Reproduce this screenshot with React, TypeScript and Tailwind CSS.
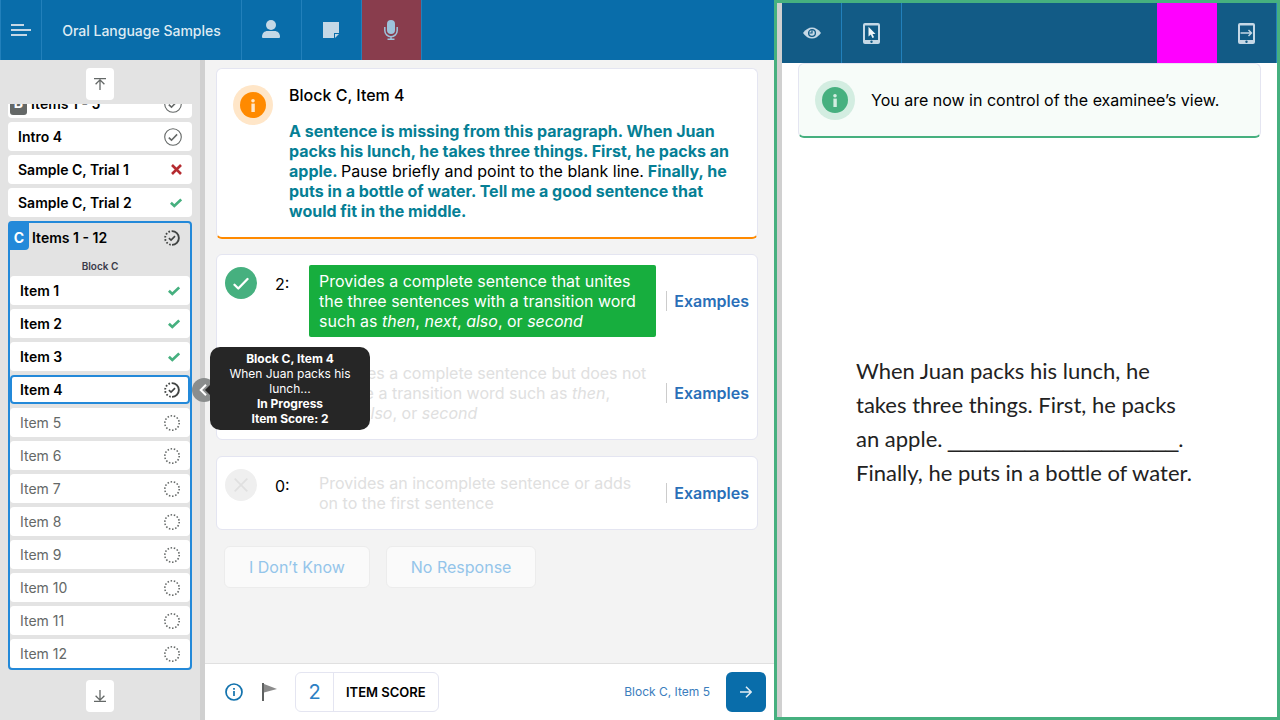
import type { ReactNode } from "react";

type Status = "done" | "right" | "wrong" | "progress" | "open";

function CheckGlyph({ className }: { className: string }) {
  return (
    <svg viewBox="0 0 12 10" className={className} fill="none" stroke="currentColor" strokeWidth="2.7">
      <path d="M.9 4.800 4.300 8 11.200 1.400" />
    </svg>
  );
}

function StatusIcon({ status }: { status: Status }) {
  if (status === "right") return <CheckGlyph className="h-[10px] w-3 text-[#46b07f]" />;
  if (status === "wrong")
    return (
      <svg viewBox="0 0 11 11" className="h-[11px] w-[11px]" fill="none" stroke="#b52b30" strokeWidth="2.6">
        <path d="M1 1l9 9M10 1l-9 9" />
      </svg>
    );
  if (status === "done")
    return (
      <svg viewBox="0 0 18 18" className="h-[18px] w-[18px]" fill="none" stroke="#646867">
        <circle cx="9" cy="9" r="8.3" strokeWidth="1.1" />
        <path d="M4.8 9.6l2.7 2.6 5.6-5.8" strokeWidth="1.6" />
      </svg>
    );
  if (status === "progress")
    return (
      <svg viewBox="0 0 17 17" className="h-4 w-4" fill="none" stroke="#414443">
        <path d="M8.5 1.200a7.300 7.300 0 0 1 0 14.600" strokeWidth="2" />
        <path d="M8.5 15.800a7.300 7.300 0 0 1 0-14.600" strokeWidth="2" strokeDasharray="1.7 1.8" strokeDashoffset="-1.4" />
        <path d="M5.200 8.600l2.300 2.200 4.200-4.300" strokeWidth="1.700" />
      </svg>
    );
  return (
    <svg viewBox="0 0 16 16" className="h-4 w-4" fill="none" stroke="#646867">
      <circle cx="8" cy="8" r="7.200" strokeWidth="1.600" strokeDasharray="1.500 1.730" />
    </svg>
  );
}

function NavRow({ label, status, badge, current }: { label: string; status: Status; badge?: string; current?: boolean }) {
  return (
    <li className="shrink-0">
      <button
        className={`relative flex h-[29px] w-full items-center justify-between rounded-[4px] bg-white pr-[10px] text-left text-sm ${
          badge ? "pl-[23px]" : "pl-[10px]"
        } ${status === "open" ? "text-[#646867]" : "font-semibold text-black"} ${
          current ? "ring-2 ring-inset ring-[#2389d9]" : ""
        }`}
      >
        {badge && (
          <span className="absolute bottom-[3px] left-[2px] flex h-[25px] w-[17px] items-center justify-center rounded-[3px] bg-[#646867] text-sm font-bold text-white">
            {badge}
          </span>
        )}
        <span>{label}</span>
        <StatusIcon status={status} />
      </button>
    </li>
  );
}

const blockItems: { label: string; status: Status }[] = Array.from({ length: 12 }, (_, i) => ({
  label: `Item ${i + 1}`,
  status: i < 3 ? "right" : i === 3 ? "progress" : "open",
}));

function Sidebar() {
  return (
    <nav aria-label="Items" className="relative flex w-[205px] shrink-0 flex-col border-r-[5px] border-[#d0d0d0] bg-[#e3e3e3] px-2 py-2">
      <button aria-label="Scroll to top" className="mb-1 flex h-8 w-7 shrink-0 items-center justify-center self-center rounded-[4px] bg-white">
        <svg viewBox="0 0 12 12" className="h-3 w-3" fill="none" stroke="#646867" strokeWidth="1.3">
          <path d="M0 .7h12M6 12V1.8M1.6 6.2 6 1.8l4.4 4.4" />
        </svg>
      </button>
      <ul className="flex min-h-0 flex-1 flex-col justify-end gap-1 overflow-hidden">
        <NavRow label="Items 1 - 5" status="done" badge="B" />
        <NavRow label="Intro 4" status="done" />
        <NavRow label="Sample C, Trial 1" status="wrong" />
        <NavRow label="Sample C, Trial 2" status="right" />
        <li className="shrink-0 rounded-[4px] border-2 border-[#2389d9]">
          <div className="flex h-[30px] items-center pr-[10px]">
            <span className="-ml-px mr-[3px] flex h-[27px] w-5 items-center justify-center self-start rounded-br-[4px] bg-[#2389d9] pt-[2px] text-sm font-bold text-white">
              C
            </span>
            <span className="flex-1 text-sm font-semibold text-black">Items 1 - 12</span>
            <StatusIcon status="progress" />
          </div>
          <div className="h-[23px] text-center text-[10px] leading-[26px] font-semibold text-[#3b3b4a]">Block C</div>
          <ul className="flex flex-col gap-1">
            {blockItems.map((item, i) => (
              <NavRow key={item.label} label={item.label} status={item.status} current={i === 3} />
            ))}
          </ul>
        </li>
      </ul>
      <button aria-label="Scroll to bottom" className="mt-[10px] flex h-8 w-7 shrink-0 items-center justify-center self-center rounded-[4px] bg-white">
        <svg viewBox="0 0 12 12" className="h-3 w-3" fill="none" stroke="#646867" strokeWidth="1.3">
          <path d="M0 11.3h12M6 0v10.2M1.6 5.8 6 10.2l4.4-4.4" />
        </svg>
      </button>
      <button aria-label="Collapse panel" className="absolute top-[318px] -right-[16px] z-10 flex h-6 w-6 items-center rounded-full bg-[#8a8d8d] pl-[7px]">
        <svg viewBox="0 0 8 12" className="h-3 w-2" fill="none" stroke="#fff" strokeWidth="2">
          <path d="M7 .7 1.7 6 7 11.3" />
        </svg>
      </button>
      <div role="tooltip" className="absolute top-[287px] left-[210px] z-20 w-40 rounded-[10px] bg-[#262626] px-[18px] py-[4px] text-center text-xs leading-[15px] text-white">
        <span className="absolute top-[38px] -left-[5px] h-0 w-0 border-y-[5px] border-r-[5px] border-y-transparent border-r-[#262626]" />
        <div className="font-bold">Block C, Item 4</div>
        <div>When Juan packs his lunch...</div>
        <div className="font-bold">In Progress</div>
        <div className="font-bold">Item Score: 2</div>
      </div>
    </nav>
  );
}

function InfoBadge({ tone }: { tone: "orange" | "green" }) {
  const orange = tone === "orange";
  return (
    <svg viewBox="0 0 40 40" className="h-10 w-10 shrink-0">
      <circle cx="20" cy="20" r="20" fill={orange ? "#ffe6c8" : "#d3ede1"} />
      <circle cx="20" cy="20" r="13" fill={orange ? "#ff8a00" : "#46b07f"} />
      <circle cx="20" cy="15.7" r="1.8" fill={orange ? "#ffe6c8" : "#d3ede1"} />
      <rect x="18.4" y="18.6" width="3.4" height="8.4" fill={orange ? "#ffe6c8" : "#d3ede1"} />
    </svg>
  );
}

function ScoreRow({ score, selected, children }: { score: number; selected?: boolean; children: ReactNode }) {
  return (
    <div className="flex">
      <button
        aria-label={`Score ${score}`}
        className={`mt-[2px] flex h-8 w-8 shrink-0 items-center justify-center rounded-full ${
          selected ? "bg-[#46b07f] text-white" : "bg-[#efefef] text-[#e0e0e0]"
        }`}
      >
        {score === 0 ? (
          <svg viewBox="0 0 14 14" className="h-[14px] w-[14px]" fill="none" stroke="currentColor" strokeWidth="1.7">
            <path d="M.7.7l12.6 12.6M13.3.7.7 13.3" />
          </svg>
        ) : (
          <svg viewBox="0 0 16 13" className="h-[13px] w-4" fill="none" stroke="currentColor" strokeWidth="2.3" strokeLinecap="round" strokeLinejoin="round">
            <path d="M1.500 7.800 5.300 11.500 14.500 2" />
          </svg>
        )}
      </button>
      <span className="w-[52px] shrink-0 pt-[9px] pl-[18px]">{score}:</span>
      <p className={`min-w-0 flex-1 rounded-[2px] py-[6px] pr-2 pl-[10px] ${selected ? "bg-[#17ae3e] text-white" : "text-[#e0e0e0]"}`}>
        {children}
      </p>
      <a href="#examples" className="ml-[10px] self-center border-l border-[#ccc] pl-[7px] font-semibold text-[#2a6fb8]">
        Examples
      </a>
    </div>
  );
}

const cell = "flex h-full w-[60px] items-center justify-center border-r border-[#2280bb]";

function PrimaryHeader() {
  return (
    <header className="flex h-[60px] shrink-0 bg-[#096daa] text-[#c5d8e6]">
      <button aria-label="Menu" className="flex w-[42px] items-center border-x border-[#2280bb] pl-[10px]">
        <svg viewBox="0 0 20 12" className="h-3 w-5" fill="none" stroke="currentColor" strokeWidth="2">
          <path d="M0 1h13M0 6h20M0 11h16" />
        </svg>
      </button>
      <h1 className="flex w-[200px] items-center justify-center border-r border-[#2280bb] pt-[2px] text-sm font-medium text-[#dfebf3]">
        Oral Language Samples
      </h1>
      <button aria-label="Examinee" className={`${cell} pr-[2px] pb-[2px]`}>
        <svg viewBox="0 0 18 18" className="h-[18px] w-[18px]" fill="currentColor">
          <circle cx="9" cy="5" r="5" />
          <path d="M0 17c0-4 2.500-6 5.500-6h7c3 0 5.500 2 5.500 6q0 1-1 1H1q-1 0-1-1z" />
        </svg>
      </button>
      <button aria-label="Notes" className={`${cell} pr-[2px]`}>
        <svg viewBox="0 0 16 16" className="h-4 w-4" fill="currentColor">
          <path d="M0 0h16v11h-5v5H0z" />
          <path d="M12 12h4l-4 4z" />
        </svg>
      </button>
      <button aria-label="Microphone" className="flex w-[60px] items-center justify-center border-r border-[#2280bb] bg-[#893d4d] pr-[2px] text-[#9dc3db]">
        <svg viewBox="0 0 14 20" className="h-5 w-[14px]">
          <rect x="3" y="0" width="8" height="14" rx="4" fill="currentColor" />
          <path d="M.8 7v3.500a6.200 6.200 0 0 0 12.400 0V7M7 16v3M3.500 19.300h7" fill="none" stroke="currentColor" strokeWidth="1.500" />
        </svg>
      </button>
    </header>
  );
}

function Tablet({ children }: { children: ReactNode }) {
  return (
    <svg viewBox="0 0 17 21" className="h-[21px] w-[17px]">
      <path fillRule="evenodd" fill="#c5d8e6" d="M2 0h13q2 0 2 2v17q0 2-2 2H2q-2 0-2-2V2q0-2 2-2zM2 2.500v14.500h13V2.500z" />
      <circle cx="8.500" cy="18.800" r="1.200" fill="#125b86" />
      {children}
    </svg>
  );
}

export default function App() {
  return (
    <div className="grid h-screen grid-cols-[774fr_506fr] overflow-hidden bg-[#f3f3f3] font-['Inter',sans-serif] text-base leading-5 text-black">
      <div className="flex min-h-0 min-w-0 flex-col">
        <PrimaryHeader />
        <div className="flex min-h-0 flex-1">
          <Sidebar />
          <div className="flex min-w-0 flex-1 flex-col">
            <main className="flex-1 pt-2 pr-4 pl-[11px]">
              <section className="flex gap-4 rounded-[6px] border border-b-2 border-[#e4e5f1] border-b-[#ff8a00] bg-white p-4">
                <InfoBadge tone="orange" />
                <div className="min-w-0">
                  <h2 className="mb-4 font-medium">Block C, Item 4</h2>
                  <p className="font-bold text-[#067f95]">
                    A sentence is missing from this paragraph. When Juan packs his lunch, he takes three things. First, he packs an apple.{" "}
                    <span className="font-normal text-black">Pause briefly and point to the blank line.</span> Finally, he puts in a bottle of water.
                    Tell me a good sentence that would fit in the middle.
                  </p>
                </div>
              </section>
              <section className="mt-[15px] flex flex-col gap-5 rounded-[6px] border border-[#e4e5f1] bg-white px-2 py-[10px]">
                <ScoreRow score={2} selected>
                  Provides a complete sentence that unites the three sentences with a transition word such as <i>then</i>, <i>next</i>, <i>also</i>, or{" "}
                  <i>second</i>
                </ScoreRow>
                <ScoreRow score={1}>
                  Provides a complete sentence but does not include a transition word such as <i>then</i>, <i>next</i>, <i>also</i>, or <i>second</i>
                </ScoreRow>
              </section>
              <section className="mt-4 rounded-[6px] border border-[#e4e5f1] bg-white px-2 py-[10px]">
                <ScoreRow score={0}>Provides an incomplete sentence or adds on to the first sentence</ScoreRow>
              </section>
              <div className="mt-4 flex gap-4 pl-2">
                <button className="h-[42px] rounded-[6px] border border-[#ececec] bg-[#fafafa] px-6 text-[#94c5ea]">I Don’t Know</button>
                <button className="h-[42px] rounded-[6px] border border-[#ececec] bg-[#fafafa] px-6 text-[#94c5ea]">No Response</button>
              </div>
            </main>
            <footer className="flex h-[57px] shrink-0 items-center border-t border-[#e0e0e0] bg-white pr-2 pl-5">
              <button aria-label="Information">
                <svg viewBox="0 0 18 18" className="h-[18px] w-[18px]" fill="none" stroke="#1272ad">
                  <circle cx="9" cy="9" r="8" strokeWidth="1.700" />
                  <path d="M9 8v5M9 5v1.700" strokeWidth="1.700" />
                </svg>
              </button>
              <button aria-label="Flag" className="ml-[19px]">
                <svg viewBox="0 0 15 18" className="h-[18px] w-[15px]">
                  <path d="M2 1l13 5L2 9.500z" fill="#8b8b8b" />
                  <path d="M0 0h2v18H0z" fill="#5e6161" />
                </svg>
              </button>
              <div className="ml-[18px] flex h-10 items-center rounded-[6px] border border-[#e4e5f1]">
                <span className="flex h-full w-[38px] items-center justify-center border-r border-[#e4e5f1] text-xl text-[#2c80c4]">2</span>
                <span className="px-3 text-[13px] font-semibold">ITEM SCORE</span>
              </div>
              <span className="ml-auto text-xs text-[#3b7dbd]">Block C, Item 5</span>
              <button aria-label="Next item" className="ml-4 flex h-10 w-10 items-center justify-center rounded-[6px] bg-[#096daa]">
                <svg viewBox="0 0 12 12" className="h-3 w-3" fill="none" stroke="#e3eef5" strokeWidth="1.500">
                  <path d="M0 6h11M6 .8 11.200 6 6 11.200" />
                </svg>
              </button>
            </footer>
          </div>
        </div>
      </div>

      <div className="flex min-w-0 border-[3px] border-[#46b07f] bg-white">
        <div className="w-[5px] shrink-0 bg-[#d0d0d0]" />
        <div className="flex min-w-0 flex-1 flex-col">
          <header className="flex h-[60px] shrink-0 bg-[#125b86]">
            <button aria-label="Examinee view" className={cell}>
              <svg viewBox="0 0 18 12" className="h-3 w-[18px]">
                <path d="M0 6Q4 .5 9 .5T18 6Q14 11.500 9 11.500T0 6z" fill="#c5d8e6" />
                <circle cx="9" cy="6" r="3.400" fill="none" stroke="#125b86" strokeWidth="1.300" />
                <path d="M9 3.300V6H6.300" fill="none" stroke="#125b86" strokeWidth="1.200" />
              </svg>
            </button>
            <button aria-label="Control view" className={cell}>
              <Tablet>
                <path d="M5.500 3.800v9.700l2.300-2 1.600 3.500 1.700-.8-1.600-3.300h3z" fill="#f0f5f8" />
              </Tablet>
            </button>
            <div className="ml-auto w-[60px] bg-[#ff00ff]" />
            <button aria-label="Send page" className={cell}>
              <Tablet>
                <path d="M2.500 10h11M10.500 7l3 3-3 3" fill="none" stroke="#c5d8e6" strokeWidth="1.400" />
              </Tablet>
            </button>
          </header>
          <div role="status" className="mx-4 flex items-center gap-4 rounded-[6px] border border-b-2 border-[#e4e5f1] border-b-[#46b07f] bg-[#f7fcf9] p-4">
            <InfoBadge tone="green" />
            <span>You are now in control of the examinee’s view.</span>
          </div>
          <p className="mt-[216px] pl-[74px] font-['Lato',sans-serif] text-[22px] leading-[34px] whitespace-nowrap text-[#222]">
            When Juan packs his lunch, he
            <br />
            takes three things. First, he packs
            <br />
            an apple. <span className="font-['Liberation_Sans',sans-serif] text-[23px] leading-none">__________________</span>.
            <br />
            Finally, he puts in a bottle of water.
          </p>
        </div>
      </div>
    </div>
  );
}
